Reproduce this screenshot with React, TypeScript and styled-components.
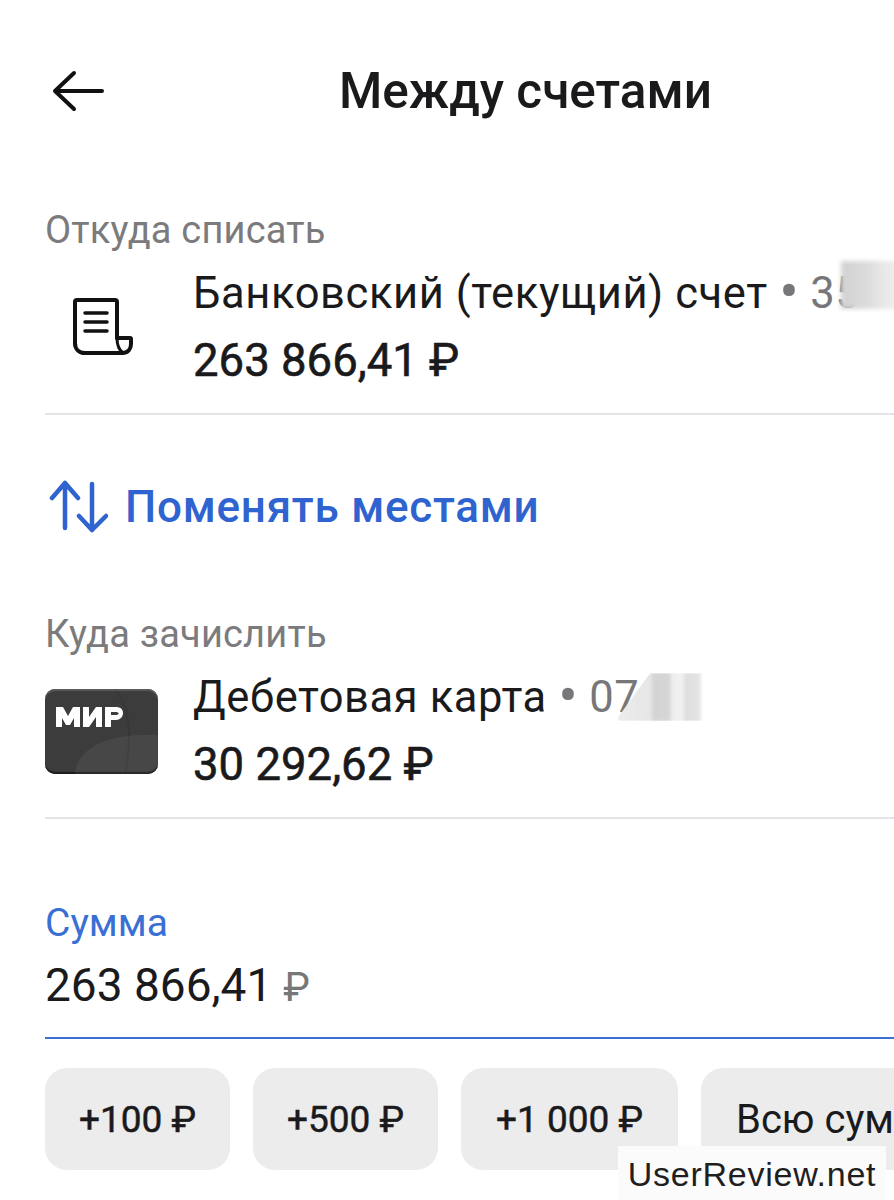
import React, { FunctionComponent } from "react";
import styled, { createGlobalStyle } from "styled-components";

const GlobalStyle = createGlobalStyle`
  html, body {
    margin: 0;
    padding: 0;
    background: #fff;
    font-family: Roboto, "Noto Sans", sans-serif;
    color: #1a1a1c;
  }
`;

const Screen = styled.div`
  position: relative;
  width: 894px;
  height: 1200px;
  overflow: hidden;
  background: #fff;
`;

const Header = styled.header`
  display: flex;
  align-items: center;
  height: 64px;
  padding: 59px 0 0 52px;
`;

const BackIcon = styled.svg`
  width: 54px;
  height: 42px;
  flex: none;
`;

const Title = styled.h1`
  margin: 0 0 0 233px;
  font-size: 49.5px;
  line-height: 64px;
  font-weight: 500;
  white-space: nowrap;
`;

const Section = styled.section<{ $top: number }>`
  padding-left: 45px;
  margin-top: ${(p) => p.$top}px;
`;

const Label = styled.div`
  font-size: 38px;
  line-height: 44px;
  color: #7b7b7d;
  letter-spacing: 0.2px;
`;

const AccountRow = styled.div`
  display: flex;
  height: 163px;
  border-bottom: 2px solid #e4e4e6;
  box-sizing: border-box;
`;

const IconCell = styled.div`
  flex: none;
  width: 148px;
  display: flex;
  align-items: flex-start;
`;

const AccountInfo = styled.div`
  white-space: nowrap;
  padding-top: 17px;
`;

const AccountName = styled.div`
  position: relative;
  font-size: 43.5px;
  line-height: 50px;
  letter-spacing: 0.6px;
`;

const Muted = styled.span`
  color: #77777a;
`;

const Dot = styled.span`
  font-size: 58px;
  line-height: 0;
  vertical-align: -3px;
  letter-spacing: 0;
`;

const Balance = styled.div`
  margin-top: 17px;
  font-size: 45.5px;
  line-height: 50px;
  -webkit-text-stroke: 0.6px #1a1a1c;
`;

const Blur = styled.div<{ $left: number; $top: number; $width: number; $height: number }>`
  position: absolute;
  left: ${(p) => p.$left}px;
  top: ${(p) => p.$top}px;
  width: ${(p) => p.$width}px;
  height: ${(p) => p.$height}px;
  background: linear-gradient(90deg, #d2d2d2 0%, #dadada 40%, #e8e8e8 70%, #efefef 100%);
  filter: blur(2px);
`;

const PatchyBlur = styled(Blur)`
  background: linear-gradient(90deg, #ececec 0%, #e6e6e6 38%, #d4d4d4 42%, #d6d6d6 60%, #ededed 64%, #f2f2f2 75%, #dedede 80%, #e4e4e4 95%, #ffffff 100%);
  clip-path: polygon(38% 0, 100% 0, 100% 100%, 0 100%, 0 92%);
  filter: blur(1px);
`;

const SwapRow = styled.div`
  display: flex;
  align-items: center;
  margin: 64px 0 0 48px;
  height: 56px;
  color: #2f63d0;
`;

const SwapIcon = styled.svg`
  width: 60px;
  height: 56px;
  flex: none;
`;

const SwapText = styled.span`
  margin-left: 17px;
  font-size: 44px;
  font-weight: 500;
  letter-spacing: 0.75px;
  white-space: nowrap;
`;

const CardThumb = styled.div`
  position: relative;
  width: 113px;
  height: 85px;
  margin-top: 33px;
  overflow: hidden;
  border-radius: 10px;
  background: #3c3c3d;
  box-shadow: inset 0 2px 1px #5a5a5a, inset 0 -2px 1px #1c1c1c;
`;

const CardLogo = styled.svg`
  position: absolute;
  inset: 0;
  width: 113px;
  height: 85px;
`;

const AmountLabel = styled.div`
  font-size: 39px;
  line-height: 44px;
  color: #3a6fd4;
`;

const AmountField = styled.div`
  margin-top: 16px;
  padding-bottom: 25px;
  border-bottom: 2px solid #3a6fd4;
  font-size: 46px;
  line-height: 48px;
  white-space: nowrap;
`;

const AmountCurrency = styled(Muted)`
  margin-left: 11px;
  font-size: 40px;
`;

const Chips = styled.div`
  display: flex;
  gap: 23px;
  margin: 29px 0 0 45px;
`;

const Chip = styled.div<{ $width: number }>`
  flex: none;
  box-sizing: border-box;
  width: ${(p) => p.$width}px;
  height: 102px;
  border-radius: 22px;
  background: #ececec;
  display: flex;
  align-items: center;
  justify-content: center;
  font-size: 37px;
  -webkit-text-stroke: 0.5px #1a1a1c;
  white-space: nowrap;
`;

const WideChip = styled(Chip)`
  justify-content: flex-start;
  padding-left: 35px;
  font-size: 40px;
  -webkit-text-stroke: 0;
`;

const Watermark = styled.div`
  position: absolute;
  left: 618px;
  top: 1146px;
  width: 268px;
  height: 54px;
  background: #fbfbfb;
  color: #1f1f1f;
  font-family: "Liberation Sans", Arial, sans-serif;
  font-size: 34px;
  line-height: 56px;
  text-align: center;
  letter-spacing: 0.75px;
`;

const DocumentIcon = () => (
  <svg width="70" height="66" viewBox="0 0 70 66" fill="none" stroke="#111" strokeWidth="4" strokeLinecap="round" strokeLinejoin="round" style={{ margin: "45px 0 0 27px" }}>
    <path d="M3 46V5a2 2 0 0 1 2-2H43a2 2 0 0 1 2 2V41" />
    <path d="M3 46c0 6 4 10 10 10H50c6 0 9-4 9-9v-5c0-1-1-1-1-1H45" />
    <path d="M45 41c0 8 2 12 6 15" strokeWidth="3" />
    <path d="M13 16H35M13 25H35M13 34H35" strokeWidth="3.5" />
  </svg>
);

const App: FunctionComponent = () => (
  <Screen>
    <GlobalStyle />
    <Header>
      <BackIcon viewBox="0 0 54 42" fill="none" stroke="#111" strokeWidth="4" strokeLinecap="round" strokeLinejoin="round">
        <path d="M50 21H3M22 3 3 21l19 18" />
      </BackIcon>
      <Title>Между счетами</Title>
    </Header>

    <Section $top={85}>
      <Label>Откуда списать</Label>
      <AccountRow>
        <IconCell>
          <DocumentIcon />
        </IconCell>
        <AccountInfo>
          <AccountName>
            Банковский (текущий) счет <Muted><Dot>•</Dot> 35</Muted>
            <Blur $left={648} $top={-8} $width={60} $height={48} />
          </AccountName>
          <Balance>263 866,41 ₽</Balance>
        </AccountInfo>
      </AccountRow>
    </Section>

    <SwapRow>
      <SwapIcon viewBox="0 0 60 56" fill="none" stroke="#2f63d0" strokeWidth="4.500" strokeLinecap="round" strokeLinejoin="round">
        <path d="M4 19 17 4l13 15M17 4v45M31 37l13 14 14-14M44 5v46" />
      </SwapIcon>
      <SwapText>Поменять местами</SwapText>
    </SwapRow>

    <Section $top={77}>
      <Label>Куда зачислить</Label>
      <AccountRow>
        <IconCell>
          <CardThumb>
            <CardLogo viewBox="0 0 113 85">
              <path d="M30 85C32 60 60 44 113 46V85Z" fill="#fff" opacity="0.06" />
              <path d="M70 0C84 16 88 44 80 85" stroke="#000" strokeOpacity="0.08" strokeWidth="2" fill="none" />
              <path d="M11 38V18h7l5 9 5-9h7v20h-6V29l-4 7h-4l-4-7v9ZM38 38V18h6v10l7-10h6v20h-6V28l-7 10ZM60 38V18H71c4 0 7 2 7 6 0 4-3 7-7 7H66v7ZM66 23v3h6l2-1.500-2-1.500Z" fill="#fff" fillRule="evenodd" />
            </CardLogo>
          </CardThumb>
        </IconCell>
        <AccountInfo>
          <AccountName>
            Дебетовая карта <Muted><Dot>•</Dot> 07</Muted>
            <PatchyBlur $left={425} $top={0} $width={85} $height={48} />
          </AccountName>
          <Balance>30 292,62 ₽</Balance>
        </AccountInfo>
      </AccountRow>
    </Section>

    <Section $top={82}>
      <AmountLabel>Сумма</AmountLabel>
      <AmountField>
        263 866,41<AmountCurrency>₽</AmountCurrency>
      </AmountField>
    </Section>

    <Chips>
      <Chip $width={185}>+100 ₽</Chip>
      <Chip $width={185}>+500 ₽</Chip>
      <Chip $width={217}>+1 000 ₽</Chip>
      <WideChip $width={300}>Всю сумму</WideChip>
    </Chips>

    <Watermark>UserReview.net</Watermark>
  </Screen>
);

export default App;
